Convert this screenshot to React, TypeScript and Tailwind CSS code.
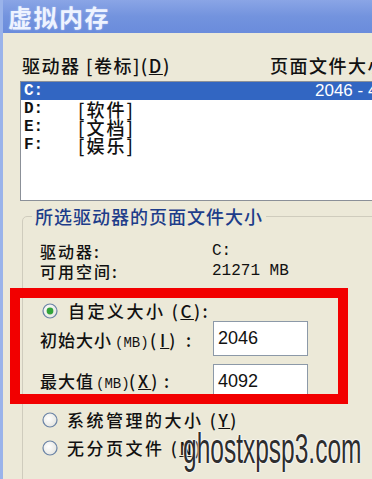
import React from "react";

const Radio = ({ checked }: { checked?: boolean }) => (
  <svg width="16" height="16" viewBox="0 0 16 16" className="shrink-0">
    <defs>
      <radialGradient id={checked ? "rgc" : "rgu"} cx="0.4" cy="0.4" r="0.7">
        <stop offset="0" stopColor="#ffffff" />
        <stop offset="1" stopColor="#e2e2dc" />
      </radialGradient>
    </defs>
    <circle cx="8" cy="8" r="7" fill={`url(#${checked ? "rgc" : "rgu"})`} stroke="#6a83a6" strokeWidth="1.2" />
    {checked && <circle cx="8" cy="8" r="3.4" fill="#33a43a" />}
  </svg>
);

export default function App() {
  const cjk = "font-['Noto_Sans_CJK_SC','Liberation_Sans',sans-serif]";
  const mono = "font-['Liberation_Mono','DejaVu_Sans_Mono',monospace]";
  return (
    <div className={`relative w-[372px] h-[479px] overflow-hidden bg-[#ECE9D8] flex flex-col text-[#111] font-medium ${cjk}`}>
      {/* title bar */}
      <div className="h-[33px] shrink-0 flex items-center pl-[5px] bg-gradient-to-b from-[#8aa5e6] via-[#7393de] to-[#6a8cdc] border-l-[3px] border-[#9ab3ea]">
        <span className="text-[24px] leading-none font-bold text-[#eef3ff] tracking-[1.5px] [text-shadow:0_0_2px_#a7bcee]">虚拟内存</span>
      </div>
      <div className="flex flex-1">
        <div className="w-[3px] bg-[#9ab3ea] shrink-0" />
        <div className="flex-1 pt-[22px] whitespace-nowrap">
          {/* header */}
          <div className="flex h-[20px] items-center pl-[19px] text-[18px] leading-[20px]">
            <span className="w-[248px] shrink-0 tracking-[1.5px]">
              驱动器 [卷标](<span className="underline">D</span>)
            </span>
            <span className="tracking-[1.5px]">页面文件大小</span>
          </div>
          {/* list box */}
          <div className="ml-[17px] mt-[6px] h-[120px] w-[400px] border border-[#8b9098] bg-white text-[16px]">
            {[
              { d: "C:", l: "", s: "2046 - 4092", sel: true },
              { d: "D:", l: "[软件]" },
              { d: "E:", l: "[文档]" },
              { d: "F:", l: "[娱乐]" },
            ].map((r) => (
              <div
                key={r.d}
                className={`flex h-[18px] items-center ${r.sel ? "bg-[#3266c2] text-white" : ""}`}
              >
                <span className={`w-[57px] pl-[3px] shrink-0 ${mono} text-[16px] font-bold`}>{r.d}</span>
                <span className="w-[237px] shrink-0 text-[18px] tracking-[2px] leading-[18px]">{r.l}</span>
                {r.s && <span className="font-['Liberation_Sans',sans-serif] font-normal text-[17px]">{r.s}</span>}
              </div>
            ))}
          </div>
          {/* group box */}
          <fieldset className="ml-[19px] mt-[5px] w-[400px] h-[300px] border border-[#cfccbd] rounded-tl-[5px] p-0 m-0">
            <legend className="ml-[9px] px-[3px] text-[18px] leading-[20px] text-[#1e3d8a] tracking-[1px]">
              所选驱动器的页面文件大小
            </legend>
            <div className="pl-[17px] text-[16px]">
              <div className="mt-[15px] h-[20px] flex items-center">
                <span className="w-[172px] shrink-0 tracking-[2px]">驱动器:</span>
                <span className={`${mono} text-[16px]`}>C:</span>
              </div>
              <div className="h-[20px] flex items-center">
                <span className="w-[172px] shrink-0 tracking-[2px]">可用空间:</span>
                <span className={`${mono} text-[16px]`}>21271 MB</span>
              </div>
              <div className="mt-[20px] h-[20px] flex items-center">
                <span className="ml-[2px]"><Radio checked /></span>
                <span className="ml-[10px] text-[17px] tracking-[2.5px]">
                  自定义大小 (<span className="underline">C</span>):
                </span>
              </div>
              <div className="h-[35px] flex items-center">
                <span className="w-[173px] shrink-0 pt-[4px] text-[17px] flex items-baseline">
                  <span className="w-[75px] tracking-[1px]">初始大小</span>
                  <span className={`w-[35px] ${mono} text-[14px]`}>(MB)</span>
                  <span className="w-[36px] tracking-[4px]">(<span className="underline">I</span>)</span>
                  <span>:</span>
                </span>
                <div className="w-[95px] h-[35px] bg-white border border-[#8c99a8] flex items-center pl-[4px] font-['Liberation_Sans',sans-serif] font-normal text-[18px]">
                  2046
                </div>
              </div>
              <div className="mt-[8px] h-[34px] flex items-center">
                <span className="w-[173px] shrink-0 text-[17px] flex items-baseline">
                  <span className="w-[56px] tracking-[1px]">最大值</span>
                  <span className={`w-[33px] ${mono} text-[14px]`}>(MB)</span>
                  <span className="w-[35px] tracking-[3px]">(<span className="underline">X</span>)</span>
                  <span>:</span>
                </span>
                <div className="w-[95px] h-[34px] bg-white border border-[#8c99a8] flex items-center pl-[4px] font-['Liberation_Sans',sans-serif] font-normal text-[18px]">
                  4092
                </div>
              </div>
              <div className="mt-[12px] h-[20px] flex items-center">
                <span className="ml-[2px]"><Radio /></span>
                <span className="ml-[9px] text-[17px] tracking-[2.5px]">
                  系统管理的大小 (<span className="underline">Y</span>)
                </span>
              </div>
              <div className="mt-[8px] h-[20px] flex items-center">
                <span className="ml-[2px]"><Radio /></span>
                <span className="ml-[9px] text-[17px] tracking-[2.5px]">
                  无分页文件 (<span className="underline">N</span>)
                </span>
              </div>
            </div>
          </fieldset>
        </div>
      </div>
      {/* red annotation box */}
      <div className="absolute left-[10px] top-[288px] w-[338px] h-[116px] border-[10px] border-[#f20000]" />
      {/* watermark */}
      <div className="absolute left-[183px] top-[427px] text-[43px] leading-none origin-left [transform:scaleX(0.57)] font-['Liberation_Sans',sans-serif] font-normal text-[#2e2e2e] whitespace-nowrap [text-shadow:0_0_2px_#fff,0_0_2px_#fff,0_0_3px_#fff]">
        ghostxpsp3.com
      </div>
    </div>
  );
}
